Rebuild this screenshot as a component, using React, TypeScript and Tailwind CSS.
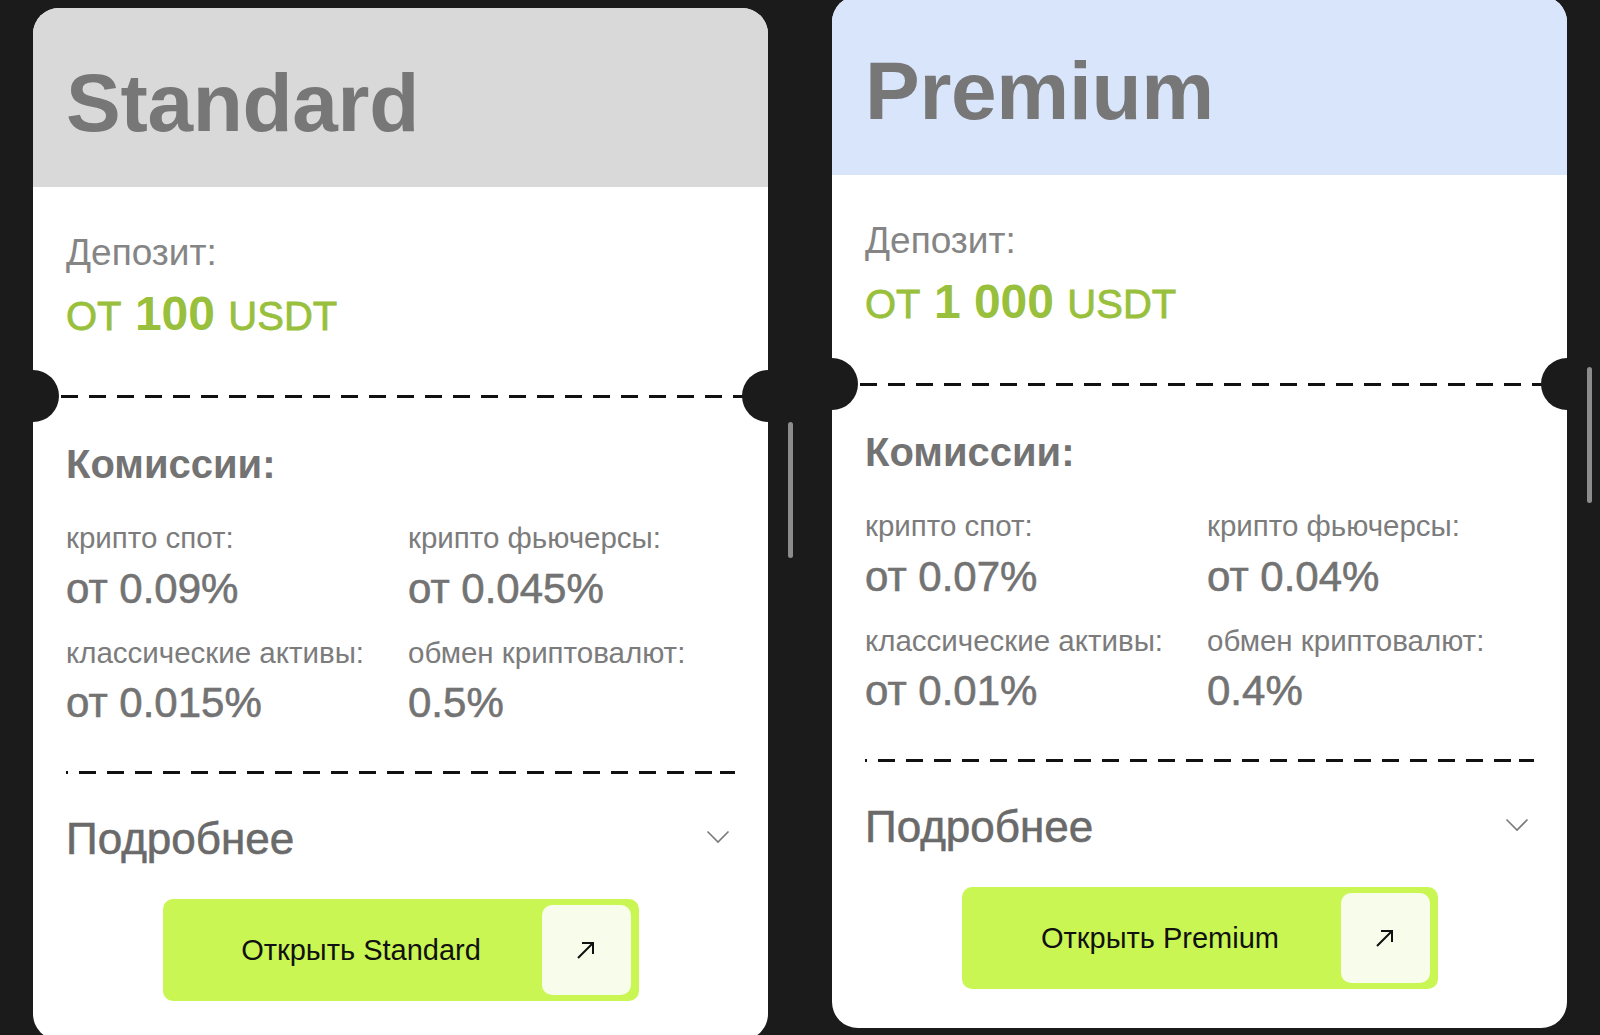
import React from "react";

type Fee = { label: string; value: string };

type Plan = {
  name: string;
  header: string;
  amount: string;
  offset: string;
  thumb: string;
  fees: Fee[];
};

const plans: Plan[] = [
  {
    name: "Standard",
    header: "bg-[#d9d9d9]",
    amount: "100",
    offset: "mt-[8px]",
    thumb: "top-[414px]",
    fees: [
      { label: "крипто спот:", value: "от 0.09%" },
      { label: "крипто фьючерсы:", value: "от 0.045%" },
      { label: "классические активы:", value: "от 0.015%" },
      { label: "обмен криптовалют:", value: "0.5%" },
    ],
  },
  {
    name: "Premium",
    header: "bg-[#d9e5fb]",
    amount: "1 000",
    offset: "-mt-[4px]",
    thumb: "top-[371px]",
    fees: [
      { label: "крипто спот:", value: "от 0.07%" },
      { label: "крипто фьючерсы:", value: "от 0.04%" },
      { label: "классические активы:", value: "от 0.01%" },
      { label: "обмен криптовалют:", value: "0.4%" },
    ],
  },
];

const Dashes = ({ className = "" }) => (
  <div
    className={`h-[3px] bg-[image:repeating-linear-gradient(90deg,#111111_0px,#111111_17px,transparent_17px,transparent_28px)] ${className}`}
  />
);

const Chevron = () => (
  <svg width="24" height="14" viewBox="0 0 24 14" fill="none" className="mr-[5px] -mt-[5px]">
    <polyline points="1.5,1.5 12,12 22.5,1.5" stroke="#7a7a7a" strokeWidth="1.6" />
  </svg>
);

const Arrow = () => (
  <svg width="22" height="22" viewBox="0 0 22 22" fill="none">
    <path d="M3 19 L18 4 M7 4 H18 V15" stroke="#111" strokeWidth="2" />
  </svg>
);

const PlanCard = ({ plan }: { plan: Plan }) => {
  return (
    <div className={`relative w-[735px] shrink-0 rounded-[26px] bg-white ${plan.offset}`}>
      <div className={`h-[179px] rounded-t-[26px] pl-[33px] pt-[54px] ${plan.header}`}>
        <h1 className="text-[82px] font-bold leading-none tracking-[-0.3px] text-[#777777]">{plan.name}</h1>
      </div>

      <div className="px-[33px] pt-[47px]">
        <p className="text-[37px] leading-none text-[#858585]">Депозит:</p>
        <p className="mt-[19px] text-[48px] leading-none text-[#98c03d]">
          <span className="text-[40px] uppercase [-webkit-text-stroke-width:0.8px]">от</span>{" "}
          <span className="font-bold">{plan.amount}</span>{" "}
          <span className="text-[40px] [-webkit-text-stroke-width:0.8px]">USDT</span>
        </p>
      </div>

      {/* perforation with notches */}
      <div className="relative mt-[57px] h-[3px]">
        <Dashes />
        <div className="absolute left-[-26px] top-[-25px] h-[52px] w-[52px] rounded-full bg-[#1b1b1b]" />
        <div className="absolute right-[-26px] top-[-25px] h-[52px] w-[52px] rounded-full bg-[#1b1b1b]" />
      </div>

      <div className="px-[33px] pb-[39px]">
        <h2 className="mt-[46px] text-[40px] font-bold leading-none text-[#737373]">Комиссии:</h2>

        <div className="mt-[39px] grid grid-cols-2 gap-x-[15px] gap-y-[28px]">
          {plan.fees.map(f => (
            <div key={f.label}>
              <p className="text-[29.5px] leading-none text-[#7c7c7c]">{f.label}</p>
              <p className="mt-[15px] text-[42px] leading-none text-[#737373] [-webkit-text-stroke-width:0.6px]">
                {f.value}
              </p>
            </div>
          ))}
        </div>

        <Dashes className="mt-[47px] bg-[position:-15px_0]" />

        <div className="mt-[43px] flex items-center justify-between">
          <span className="text-[44px] leading-none text-[#6a6a6a] [-webkit-text-stroke-width:0.6px]">Подробнее</span>
          <Chevron />
        </div>

        <button className="mx-auto mt-[38px] flex h-[102px] w-[476px] items-center rounded-[10px] bg-[#c9f653] py-[6px] pr-[8px]">
          <span className="flex-1 pl-[18px] text-center text-[29px] leading-none text-[#111111]">
            Открыть {plan.name}
          </span>
          <span className="flex h-[90px] w-[89px] items-center justify-center rounded-[10px] bg-[#f7fdea]">
            <Arrow />
          </span>
        </button>
      </div>

      {/* overlay scrollbar thumb */}
      <div className={`absolute right-[-25px] h-[136px] w-[5px] rounded-full bg-[#8c8c8c] ${plan.thumb}`} />
    </div>
  );
};

export default function App() {
  return (
    <div className="flex h-[1035px] items-start gap-[64px] overflow-hidden bg-[#1b1b1b] pl-[33px] font-['Liberation_Sans',Arial,sans-serif]">
      {plans.map(p => (
        <PlanCard key={p.name} plan={p} />
      ))}
    </div>
  );
}
